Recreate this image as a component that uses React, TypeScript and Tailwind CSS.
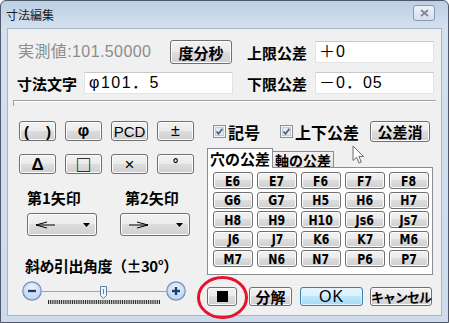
import React from "react"

const sans = "font-['Liberation_Sans','Noto_Sans_CJK_JP',sans-serif]"
const jp = "font-['Noto_Sans_CJK_JP',sans-serif]"

const face =
  "flex items-center border border-[#707070] rounded-[3px] bg-[linear-gradient(#f2f2f2_0%,#ebebeb_49%,#dddddd_50%,#cfcfcf_100%)] shadow-[inset_0_0_0_1px_#fcfcfc] text-black leading-none"
const btn = `${face} justify-center`

const GRID = [
  ["E6", "E7", "F6", "F7", "F8"],
  ["G6", "G7", "H5", "H6", "H7"],
  ["H8", "H9", "H10", "Js6", "Js7"],
  ["J6", "J7", "K6", "K7", "M6"],
  ["M7", "N6", "N7", "P6", "P7"],
]

function Check({ label, className }: { label: string; className?: string }) {
  return (
    <div className={`flex items-center ${className ?? ""}`}>
      <svg width="13" height="13" viewBox="0 0 13 13">
        <rect x="0.5" y="0.5" width="12" height="12" fill="#f4f4f4" stroke="#8f8f8f" />
        <rect x="2.5" y="2.5" width="8" height="8" fill="#e4e8ee" stroke="#c4ccd8" />
        <path d="M3.5 6.5 L5.5 8.8 L9.5 3.8" fill="none" stroke="#47608f" strokeWidth="1.7" />
      </svg>
      <span className={`${jp} ml-[2px] text-[16px] font-semibold leading-none`}>{label}</span>
    </div>
  )
}

function Arrow({ right }: { right?: boolean }) {
  return (
    <svg width="21" height="8" viewBox="0 0 21 8" className={right ? "-scale-x-100" : ""}>
      <path d="M1 4 L12 1 M1 4 L12 7 M1 4 H20" fill="none" stroke="#000" strokeWidth="1" />
    </svg>
  )
}

function Dropdown({ right }: { right?: boolean }) {
  return (
    <div className={`${face} justify-between w-[70px] h-[23px] pl-[7px] pr-[6px]`}>
      <Arrow right={right} />
      <svg width="7" height="4" viewBox="0 0 7 4">
        <path d="M0 0 H7 L3.5 4 Z" fill="#000" />
      </svg>
    </div>
  )
}

function RoundBtn({ plus }: { plus?: boolean }) {
  return (
    <svg width="20" height="20" viewBox="0 0 20 20">
      <defs>
        <radialGradient id={plus ? "gp" : "gm"} cx="0.5" cy="0.35" r="0.6">
          <stop offset="0" stopColor="#eef5fd" />
          <stop offset="1" stopColor="#bcd3f0" />
        </radialGradient>
      </defs>
      <circle cx="10" cy="10" r="9.2" fill={`url(#${plus ? "gp" : "gm"})`} stroke="#6f8fbf" strokeWidth="1.2" />
      <path d="M6 10 H14" stroke="#1f3f73" strokeWidth="2.4" />
      {plus && <path d="M10 6 V14" stroke="#1f3f73" strokeWidth="2.4" />}
    </svg>
  )
}

function Slider() {
  const ticks = Array.from({ length: 61 }, (_, i) => 6.5 + (i * 111) / 60)
  return (
    <div className="flex items-start ml-[3px]">
      <RoundBtn />
      <svg width="124" height="24" viewBox="0 0 124 24">
        <path d="M0 10.5 H124" stroke="#9aa6b6" strokeWidth="1" />
        {ticks.map((x, i) => (
          <path key={i} d={`M${x} 19 V23`} stroke="#111" strokeWidth="0.9" />
        ))}
        <path d="M58.5 5.5 H64.5 V14.5 L61.5 17.5 L58.5 14.5 Z" fill="#eef3f9" stroke="#5f7fa8" />
        <path d="M61.5 8 V13" stroke="#5f7fa8" />
      </svg>
      <RoundBtn plus />
    </div>
  )
}

export default function App() {
  return (
    <div className="relative w-[449px] h-[323px] overflow-hidden bg-white">
      <div className="flex flex-col w-full h-full border border-[#4f5869] rounded-t-[6px] bg-[linear-gradient(#bccfe6,#d4e0ef_27px,#cddbeb)]">
        <div className="h-[27px] flex items-start justify-between pl-[5px] pr-[13px]">
          <span className={`${jp} text-[12px] leading-none mt-[8px] text-[#1b1b1b]`}>寸法編集</span>
          <div className="mt-[4px] w-[22px] h-[16px] rounded-[3px] border border-[#8797ad] bg-[linear-gradient(#eef2f7,#d6dfea)] flex items-center justify-center">
            <svg width="9" height="8" viewBox="0 0 9 8">
              <path d="M1 1 L8 7 M8 1 L1 7" stroke="#7f8796" strokeWidth="1.8" />
            </svg>
          </div>
        </div>

        <div className="flex-1 mx-[6px] mb-[6px] border border-[#a9b6c6] bg-[#f0f0f0] pt-[11px] pl-[10px] pr-[6px] flex flex-col">
          {/* row 1 */}
          <div className="flex items-center h-[24px]">
            <span className={`${sans} w-[152px] text-[16px] leading-none text-[#8c8c8c] tracking-[0.4px]`}>実測値:101.50000</span>
            <div className={`${btn} ${jp} w-[62px] h-[24px] text-[15px] font-bold`}>度分秒</div>
            <span className={`${jp} ml-[15px] w-[68px] text-[15px] font-bold leading-none`}>上限公差</span>
            <div className={`${sans} w-[119px] h-[22px] bg-white border border-[#e3e3e3] border-t-[#c9c9c9] flex items-center pl-[3px] text-[16px] leading-none tracking-[1px]`}>
              ＋0
            </div>
          </div>
          {/* row 2 */}
          <div className="flex items-center h-[22px] mt-[8px]">
            <span className={`${jp} ml-[-1px] w-[67px] text-[15px] font-bold leading-none`}>寸法文字</span>
            <div className={`${sans} w-[149px] h-[22px] bg-white border border-[#e3e3e3] border-t-[#c9c9c9] flex items-center pl-[4px] text-[16px] leading-none tracking-[1.5px]`}>
              φ101．5
            </div>
            <span className={`${jp} ml-[14px] w-[68px] text-[15px] font-bold leading-none`}>下限公差</span>
            <div className={`${sans} w-[119px] h-[22px] bg-white border border-[#e3e3e3] border-t-[#c9c9c9] flex items-center pl-[3px] text-[16px] leading-none tracking-[1px]`}>
              －0．05
            </div>
          </div>
          {/* separator */}
          <div className="relative mt-[6px] ml-[-5px] w-[423px] h-[2px] border-t border-[#a0a0a0] border-b border-b-white">
            <div className="absolute left-0 top-[-1px] w-[1px] h-[6px] bg-[#a0a0a0]" />
          </div>

          {/* lower area */}
          <div className="flex items-start mt-[19px]">
            <div className="ml-[1px] w-[181px] flex flex-col">
              <div className="flex gap-[9px]">
                <div className={`${face} ${sans} justify-between w-[37px] h-[20px] px-[4px] text-[15px] font-bold`}>
                  <span>(</span>
                  <span>)</span>
                </div>
                <div className={`${btn} ${sans} w-[37px] h-[20px] text-[16px] font-bold`}>φ</div>
                <div className={`${btn} ${sans} w-[37px] h-[20px] text-[15px]`}>PCD</div>
                <div className={`${btn} ${sans} w-[37px] h-[20px] text-[16px]`}>±</div>
              </div>
              <div className="flex gap-[9px] mt-[13px]">
                <div className={`${btn} ${sans} w-[37px] h-[20px] text-[17px] font-bold`}>Δ</div>
                <div className={`${btn} ${jp} w-[37px] h-[20px] text-[16px] font-bold`}>□</div>
                <div className={`${btn} ${sans} w-[37px] h-[20px] text-[17px]`}>×</div>
                <div className={`${btn} ${sans} w-[37px] h-[20px] items-start pt-[2px] text-[14px] font-bold`}>°</div>
              </div>
              <div className={`${jp} flex mt-[16px] h-[16px] text-[15px] font-bold leading-none`}>
                <span className="ml-[8px] w-[98px]">第1矢印</span>
                <span>第2矢印</span>
              </div>
              <div className="flex gap-[23px] mt-[7px] ml-[8px]">
                <Dropdown />
                <Dropdown right />
              </div>
              <div className={`${jp} mt-[22px] ml-[6px] h-[16px] text-[15px] font-bold leading-none tracking-[-0.5px]`}>
                斜め引出角度（±30°）
              </div>
              <div className="mt-[7px]">
                <Slider />
              </div>
            </div>

            <div className="ml-[7px] w-[227px] flex flex-col">
              <div className="flex items-center h-[21px]">
                <Check label="記号" className="ml-[6px]" />
                <Check label="上下公差" className="ml-[20px]" />
                <div className={`${btn} ${jp} ml-[11px] w-[60px] h-[21px] text-[15px] font-bold`}>公差消</div>
              </div>
              <div className="flex items-end mt-[5px] h-[20px]">
                <div className={`${jp} w-[66px] h-[20px] bg-white border border-b-0 border-[#898c95] flex items-center justify-center text-[15px] font-bold leading-none relative z-10 mb-[-1px] pb-[1px]`}>
                  穴の公差
                </div>
                <div className={`${jp} w-[61px] h-[16px] bg-[linear-gradient(#f3f3f3,#e3e3e3)] border border-b-0 border-l-0 border-[#898c95] flex items-center justify-center text-[14px] font-bold leading-none`}>
                  軸の公差
                </div>
              </div>
              <div className="w-[226px] h-[108px] bg-white border border-[#898c95] pt-[4px] pl-[5px]">
                <div className="grid grid-cols-[repeat(5,40px)] gap-x-[4px] gap-y-[2.5px]">
                  {GRID.flat().map((t) => (
                    <div key={t} className={`${btn} h-[17px]`}>
                      <span className="inline-block scale-x-[0.78] font-['DejaVu_Sans',sans-serif] text-[14px] font-bold leading-none">
                        {t}
                      </span>
                    </div>
                  ))}
                </div>
              </div>
              <div className="flex items-center mt-[12px] h-[19px]">
                <div className={`${btn} w-[30px] h-[19px]`}>
                  <div className="w-[11px] h-[11px] bg-black" />
                </div>
                <div className={`${btn} ${jp} ml-[12px] w-[43px] h-[19px] text-[15px] font-bold`}>分解</div>
                <div className={`${sans} ml-[8px] w-[63px] h-[19px] flex items-center justify-center rounded-[3px] border border-[#3c7fb1] bg-[linear-gradient(#eaf6fd_0%,#d9f0fc_49%,#bee6fd_50%,#a7d9f5_100%)] shadow-[inset_0_0_0_1px_#dff2fd] text-[16px] leading-none tracking-[1px]`}>
                  OK
                </div>
                <div className={`${btn} ${jp} ml-[7px] w-[62px] h-[19px] text-[13px] font-bold tracking-[-1px]`}>キャンセル</div>
              </div>
            </div>
          </div>
        </div>
      </div>

      {/* annotation ellipse */}
      <svg className="absolute left-[196px] top-[275px]" width="54" height="46" viewBox="0 0 54 46">
        <ellipse cx="26.5" cy="22.5" rx="24" ry="20" fill="none" stroke="#e3142b" strokeWidth="3" />
      </svg>
      {/* mouse cursor */}
      <svg className="absolute left-[352px] top-[145px]" width="14" height="20" viewBox="0 0 14 20">
        <path d="M1 1 V15.5 L4.5 12.3 L7 18 L9.3 17 L6.9 11.5 H11.5 Z" fill="#fff" stroke="#6b6b6b" strokeWidth="1" strokeLinejoin="round" />
      </svg>
    </div>
  )
}
